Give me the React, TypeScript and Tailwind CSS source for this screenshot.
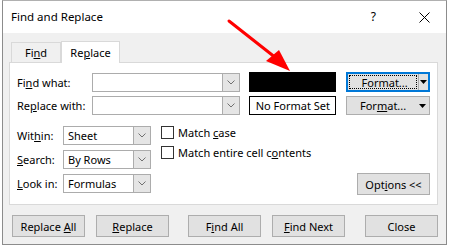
import React from 'react';

const font = { fontFamily: '"Segoe UI", "Noto Sans", sans-serif' };

const Chevron = () => (
  <svg width="8" height="5" viewBox="0 0 8 5">
    <path d="M0.5 0.5 L4 4 L7.5 0.5" fill="none" stroke="#707070" strokeWidth="1" />
  </svg>
);

const Caret = () => (
  <svg width="7" height="4" viewBox="0 0 7 4">
    <path d="M0 0 H7 L3.5 4 Z" fill="#000" />
  </svg>
);

const Combo: React.FC<{ w: string; value?: string }> = ({ w, value }) => (
  <div className={`${w} h-[19px] flex border border-[#acacac] bg-white`}>
    <div className="flex-1 flex items-center pl-[4px] leading-none">{value}</div>
    <div className="w-[17px] flex items-center justify-center bg-[#e5e5e5] border-l border-[#acacac]">
      <Chevron />
    </div>
  </div>
);

const Btn: React.FC<{ children: React.ReactNode; className?: string }> = ({ children, className = '' }) => (
  <div className={`w-[73px] h-[22px] flex items-center justify-center bg-[#e1e1e1] border border-[#adadad] leading-none ${className}`}>
    <span>{children}</span>
  </div>
);

const Check: React.FC<{ children: React.ReactNode }> = ({ children }) => (
  <div className="flex items-center h-[13px]">
    <div className="w-[13px] h-[13px] border border-[#333333] bg-white" />
    <span className="ml-[4px] leading-none">{children}</span>
  </div>
);

export default function App() {
  return (
    <div className="relative w-[449px] h-[247px] bg-white text-[11px] text-black" style={font}>
      <div className="ml-[2px] w-[445px] h-[245px] border border-[#8c8c8c] border-t-[#b0b0b0] flex flex-col bg-[#f0f0f0]">
        {/* title bar */}
        <div className="h-[32px] bg-white flex items-center pl-[8px]">
          <span className="text-[11.5px]">Find and Replace</span>
          <span className="ml-auto mr-[43px] text-[12px]">?</span>
          <svg width="11" height="11" viewBox="0 0 11 11" className="mr-[16px]">
            <path d="M0.5 0.5 L10.5 10.5 M10.5 0.5 L0.5 10.5" stroke="#000" strokeWidth="1" />
          </svg>
        </div>

        {/* tabs */}
        <div className="flex items-end h-[29px] pl-[8px]">
          <div className="w-[50px] h-[20px] border border-b-0 border-[#d9d9d9] flex items-center justify-center leading-none">
            <span>Fi<u>n</u>d</span>
          </div>
          <div className="w-[59px] h-[22px] -mb-px z-10 bg-white border border-b-0 border-[#d9d9d9] flex items-center justify-center leading-none">
            <span>Re<u>p</u>lace</span>
          </div>
        </div>

        {/* panel */}
        <div className="ml-[6px] w-[429px] h-[143px] bg-white border border-[#d9d9d9] flex flex-col pt-[9px] pl-[7px] pr-[7px]">
          <div className="flex items-center">
            <span className="w-[75px] leading-none">Fi<u>n</u>d what:</span>
            <Combo w="w-[149px]" />
            <div className="ml-[9px] w-[87px] h-[20px] bg-black" />
            <div className="ml-[10px] w-[84px] h-[20px] flex border-2 border-[#0078d7] bg-[#e1e1e1]">
              <div className="flex-1 m-px border border-dotted border-black flex items-center justify-center leading-none pl-[3px]">
                Format...
              </div>
              <div className="w-[10px] flex items-center justify-center border-l border-[#adadad]">
                <Caret />
              </div>
            </div>
          </div>
          <div className="flex items-center mt-[4px]">
            <span className="w-[75px] leading-none">Re<u>p</u>lace with:</span>
            <Combo w="w-[149px]" />
            <div className="ml-[9px] w-[87px] h-[19px] bg-white border border-black flex items-center justify-center leading-none">
              No Format Set
            </div>
            <div className="ml-[10px] w-[84px] h-[19px] flex bg-[#e1e1e1] border border-[#adadad]">
              <div className="flex-1 flex items-center justify-center leading-none pl-[4px]">
                <span>For<u>m</u>at...</span>
              </div>
              <div className="w-[14px] flex items-center justify-center">
                <Caret />
              </div>
            </div>
          </div>

          <div className="flex mt-[11px] flex-1">
            <div className="flex flex-col gap-[5px]">
              <div className="flex items-center">
                <span className="w-[46px] leading-none">Wit<u>h</u>in:</span>
                <Combo w="w-[88px]" value="Sheet" />
              </div>
              <div className="flex items-center">
                <span className="w-[46px] leading-none"><u>S</u>earch:</span>
                <Combo w="w-[88px]" value="By Rows" />
              </div>
              <div className="flex items-center">
                <span className="w-[46px] leading-none"><u>L</u>ook in:</span>
                <Combo w="w-[88px]" value="Formulas" />
              </div>
            </div>
            <div className="ml-[10px] flex flex-col gap-[7px]">
              <Check>Match <u>c</u>ase</Check>
              <Check>Match entire cell c<u>o</u>ntents</Check>
            </div>
            <div className="flex-1 flex items-end justify-end pb-[9px]">
              <Btn className="h-[21px]">Opt<u>i</u>ons &lt;&lt;</Btn>
            </div>
          </div>
        </div>

        {/* bottom buttons */}
        <div className="flex mt-[10px] pl-[9px]">
          <Btn>Replace <u>A</u>ll</Btn>
          <Btn className="ml-[11px]"><u>R</u>eplace</Btn>
          <Btn className="ml-[19px]">F<u>i</u>nd All</Btn>
          <Btn className="ml-[11px]"><u>F</u>ind Next</Btn>
          <Btn className="ml-[20px]">Close</Btn>
        </div>
      </div>

      {/* red annotation arrow */}
      <svg className="absolute left-0 top-0 pointer-events-none" width="449" height="247">
        <line x1="229" y1="21" x2="276" y2="58" stroke="#ff0000" strokeWidth="3" strokeLinecap="round" />
        <path d="M290 71 L266 61 L279 50 Z" fill="#ff0000" />
      </svg>
    </div>
  );
}
